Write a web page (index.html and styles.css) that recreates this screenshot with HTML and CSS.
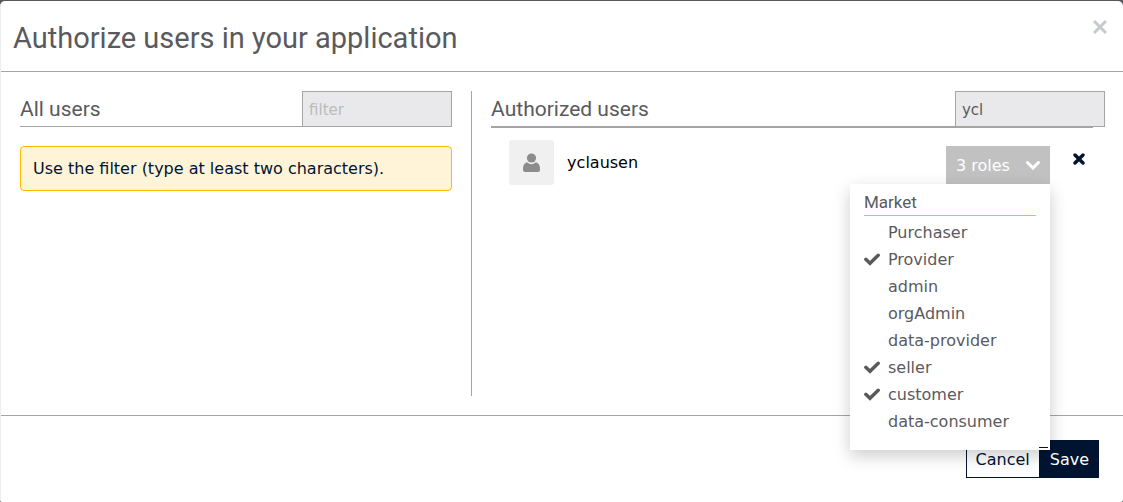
FILE: index.html
```html
<!DOCTYPE html>
<html lang="en">
<head>
<meta charset="utf-8">
<title>Authorize users</title>
<link rel="stylesheet" href="styles.css">
</head>
<body>
<main class="modal" role="dialog" aria-labelledby="title">
  <header class="modal-header">
    <h1 class="title" id="title">Authorize users in your application</h1>
    <button class="close" type="button" aria-label="Close">
      <svg width="16" height="16" viewBox="0 0 16 16"><path d="M2 2L14 14M14 2L2 14" fill="none" stroke="currentColor" stroke-width="3"/></svg>
    </button>
  </header>
  <div class="modal-body">
    <section class="column">
      <div class="column-head">
        <h2 class="subtitle">All users</h2>
        <input class="filter" type="text" placeholder="filter" aria-label="Filter all users">
      </div>
      <p class="notice">Use the filter (type at least two characters).</p>
    </section>
    <section class="column authorized">
      <div class="column-head">
        <h2 class="subtitle">Authorized users</h2>
        <input class="filter" type="text" value="ycl" aria-label="Filter authorized users">
      </div>
      <div class="user">
        <span class="avatar">
          <svg width="19" height="20" viewBox="0 0 19 20" fill="#8c8c8c"><circle cx="9.500" cy="5" r="4.600"/><path d="M5 9.300Q9.500 13 14 9.300Q18.300 10.500 18 17Q18 19 16 19H3Q1 19 1 17Q.700 10.500 5 9.300Z"/></svg>
        </span>
        <span class="user-name">yclausen</span>
        <div class="roles">
          <button class="roles-toggle" type="button" aria-expanded="true">3 roles
            <svg width="14" height="9" viewBox="0 0 14 9"><path d="M1.500 1.500L7 7L12.500 1.500" fill="none" stroke="currentColor" stroke-width="3" stroke-linecap="round"/></svg>
          </button>
          <div class="menu">
            <h3 class="menu-title">Market</h3>
            <ul class="menu-list">
              <li><button class="role" type="button">Purchaser</button></li>
              <li><button class="role" type="button"><svg class="tick" width="16" height="14" viewBox="0 0 16 14"><path d="M1.800 6.300L6 10.300L14.200 2.300" fill="none" stroke="currentColor" stroke-width="3.400" stroke-linecap="round"/></svg>Provider</button></li>
              <li><button class="role" type="button">admin</button></li>
              <li><button class="role" type="button">orgAdmin</button></li>
              <li><button class="role" type="button">data-provider</button></li>
              <li><button class="role" type="button"><svg class="tick" width="16" height="14" viewBox="0 0 16 14"><path d="M1.800 6.300L6 10.300L14.200 2.300" fill="none" stroke="currentColor" stroke-width="3.400" stroke-linecap="round"/></svg>seller</button></li>
              <li><button class="role" type="button"><svg class="tick" width="16" height="14" viewBox="0 0 16 14"><path d="M1.800 6.300L6 10.300L14.200 2.300" fill="none" stroke="currentColor" stroke-width="3.400" stroke-linecap="round"/></svg>customer</button></li>
              <li><button class="role" type="button">data-consumer</button></li>
            </ul>
          </div>
        </div>
        <button class="remove" type="button" aria-label="Remove yclausen">
          <svg width="12" height="12" viewBox="0 0 12 12"><path d="M2 2L10 10M10 2L2 10" fill="none" stroke="currentColor" stroke-width="3.400" stroke-linecap="round"/></svg>
        </button>
      </div>
    </section>
  </div>
  <footer class="modal-footer">
    <button class="button" type="button">Cancel</button>
    <button class="button primary" type="button">Save</button>
  </footer>
</main>
</body>
</html>
```
FILE: styles.css
```css
* { box-sizing: border-box; }
html { background: #58585c; }
body {
  margin: 0;
  padding-top: 1px;
  font: 16px/24px "DejaVu Sans", Verdana, sans-serif;
  color: #001432;
}
button, input { font: inherit; color: inherit; margin: 0; }
button { padding: 0; border: 0; background: none; }
svg { display: block; }
.modal {
  min-height: calc(100vh - 1px);
  background: #fff;
  border-left: 1px solid #eee;
  border-radius: 5px 5px 2px 2px;
}
.modal-header {
  display: flex;
  justify-content: space-between;
  align-items: flex-start;
  padding: 17px 15px 13px 12px;
  border-bottom: 1px solid #a5a5a5;
}
.title, .subtitle, .menu-title {
  margin: 0;
  font-family: Roboto, "Open Sans", sans-serif;
  font-weight: 400;
  color: #5a5a5e;
}
.title { font-size: 29px; line-height: 40px; }
.close { margin-top: 1px; color: #c8cad0; }
.modal-body {
  display: grid;
  grid-template-columns: 419fr 581fr;
  padding: 19px 0;
}
.column { padding: 0 19px; min-height: 305px; }
.authorized { padding-right: 18px; border-left: 1px solid #a5a5a5; }
.column-head {
  display: flex;
  justify-content: space-between;
  align-items: center;
  background: linear-gradient(#a5a5a5, #a5a5a5) left bottom / 100% 1px no-repeat;
}
.authorized .column-head {
  margin-bottom: -1px;
  padding-bottom: 1px;
  background-size: calc(100% - 12px) 2px;
}
.subtitle { font-size: 21px; line-height: 36px; }
.filter {
  width: 150px;
  height: 36px;
  padding: 2px 6px 0;
  border: 1px solid #a5a5a5;
  border-radius: 0;
  background: #e9e9eb;
  color: #5a5a5e;
  font-size: 15px;
}
.filter::placeholder { color: #bbb; opacity: 1; }
.notice {
  margin: 19px 0 0;
  padding: 10px 12px 9px;
  border: 1px solid #ffb800;
  border-radius: 4px;
  background: #fff4d8;
}
.user { display: flex; align-items: flex-start; padding: 13px 18px 0; }
.avatar {
  display: grid;
  place-items: center;
  width: 45px;
  height: 45px;
  border-radius: 3px;
  background: #f0f0f0;
}
.user-name { margin: 11px auto 0 13px; color: #000; }
.roles { position: relative; margin-top: 6px; }
.roles-toggle {
  display: flex;
  align-items: center;
  justify-content: space-between;
  width: 104px;
  height: 38px;
  padding: 1px 10px 0;
  background: #c1c1c1;
  color: #fff;
}
.remove { margin: 13px 2px 0 23px; color: #001432; }
.menu {
  position: absolute;
  top: 100%;
  right: 0;
  width: 200px;
  padding: 8px 14px 15px;
  background: #fff;
  box-shadow: 0 6px 16px rgba(0, 0, 0, .2);
}
/* outline of the footer buttons showing at the lower edge */
.menu::after {
  content: "";
  position: absolute;
  right: 2px;
  bottom: 2px;
  width: 9px;
  height: 1px;
  background: #001432;
}
.menu-title {
  padding-bottom: 3px;
  border-bottom: 1px solid #ffb81c;
  font-size: 17px;
  line-height: 20px;
}
.menu-list { margin: 3px 0 0; padding: 0; list-style: none; color: #5a5a5e; }
.role {
  display: grid;
  grid-template-columns: 24px auto;
  align-items: center;
  height: 27px;
}
.role::before { content: ""; }
.role:has(.tick)::before { display: none; }
.modal-footer {
  display: flex;
  justify-content: flex-end;
  padding: 24px;
  border-top: 1px solid #a5a5a5;
}
.button {
  height: 38px;
  padding: 2px 9px 0;
  border: 1px solid #001432;
  background: #fff;
}
.primary { background: #001432; color: #fff; }
```
